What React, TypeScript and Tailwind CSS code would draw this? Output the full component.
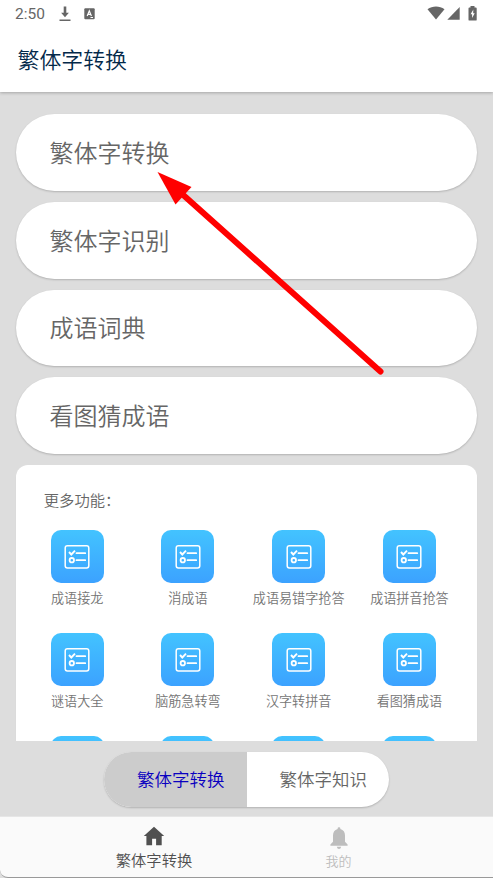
import React from 'react';

const menuItems = ['繁体字转换', '繁体字识别', '成语词典', '看图猜成语'];

const features = [
  '成语接龙',
  '消成语',
  '成语易错字抢答',
  '成语拼音抢答',
  '谜语大全',
  '脑筋急转弯',
  '汉字转拼音',
  '看图猜成语',
  '',
  '',
  '',
  '',
];

const StatusBar: React.FC = () => (
  <div className="flex h-7 items-center justify-between pl-[15px] pr-4 text-[#666666]">
    <div className="flex items-center">
      <span className="w-[44px] font-['Roboto',sans-serif] text-[15.5px] font-normal leading-7">2:50</span>
      <svg className="h-4 w-3" viewBox="0 0 12 16" fill="currentColor">
        <path d="M4.700 .5h2.600v6.300h2.600L6 11.300 2.100 6.800h2.600zM.5 13.500h11v1.500H.5z" />
      </svg>
      <svg className="ml-[13px] h-3 w-[11px]" viewBox="0 0 11 12">
        <rect x="0.300" y="0.200" width="10.400" height="11" rx="1" fill="currentColor" />
        <path d="M3.200 8 5.300 2.800 7.400 8M4 6.400h2.700M6.500 9.500h2.500" fill="none" stroke="white" strokeWidth="1.200" />
      </svg>
    </div>
    <div className="flex -translate-y-px items-center">
      <svg className="h-[14px] w-[18px]" viewBox="0 0 18 14" fill="currentColor">
        <path d="M.5 3.300C5.400-.3 12.600-.3 17.500 3.300L9 13.500z" />
      </svg>
      <svg className="ml-[2px] h-[14px] w-[13px]" viewBox="0 0 13 14" fill="currentColor">
        <path d="M12.700 1v12.700H.3z" />
      </svg>
      <svg className="ml-2 h-[15px] w-[9px]" viewBox="0 0 9 15">
        <path d="M2.500 0h4v1.500h1.300q.9 0 .9.900v11.300q0 .9-.9.900H1.400q-.9 0-.9-.9V2.400q0-.9.900-.9h1.100z" fill="currentColor" />
        <path d="M5.300 3.500 2.600 8.300h1.500v3.700l2.600-4.800H5.200z" fill="white" />
      </svg>
    </div>
  </div>
);

const FeatureIcon: React.FC = () => (
  <div className="flex h-[53px] w-[53px] items-center justify-center rounded-[10px] bg-gradient-to-b from-[#43c3ff] to-[#3ca2ff]">
    <svg className="h-[25px] w-[26px]" viewBox="0 0 26 25" fill="none" stroke="white" strokeWidth="1.500">
      <rect x="1.200" y="1.700" width="23.600" height="22.300" rx="2.200" />
      <path d="m5 8 2.300 2.500L11 6.600" strokeWidth="1.900" />
      <path d="M12.500 9.200h8.700M12.500 16.200h8.700" strokeWidth="1.800" strokeLinecap="round" />
      <circle cx="7.800" cy="16.200" r="2.200" strokeWidth="1.800" />
    </svg>
  </div>
);

const App: React.FC = () => {
  return (
    <div className="relative flex h-[878px] w-[493px] flex-col overflow-hidden bg-[#dddddd] font-['Noto_Sans_CJK_SC',sans-serif] font-[350] text-[#666666]">
      <header className="z-10 h-[92px] shrink-0 bg-white shadow-[0_1px_3px_rgba(0,0,0,0.25)]">
        <StatusBar />
        <h1 className="pl-[17.500px] pt-[15px] text-[21.900px] font-[350] leading-8 text-[#03294a]">繁体字转换</h1>
      </header>

      <main className="flex h-[649px] shrink-0 flex-col gap-[11px] overflow-hidden px-4 pt-[22px]">
        {menuItems.map((item) => (
          <button
            key={item}
            className="flex h-[76.800px] w-[461px] shrink-0 items-center rounded-full bg-white pb-px pl-[33.500px] text-left text-[24px] shadow-[0_1px_2px_rgba(0,0,0,0.2)]"
          >
            {item}
          </button>
        ))}

        {/* More features */}
        <section className="w-[461px] shrink-0 rounded-[12px] bg-white pl-[5.800px] pt-[22px] shadow-[0_1px_1px_rgba(0,0,0,0.08)]">
          <h2 className="mb-[19px] pl-[22px] text-[15.300px] font-[350] leading-6">更多功能：</h2>
          <div className="grid w-[443px] grid-cols-4">
            {features.map((name, index) => (
              <div key={index} className="flex h-[103px] flex-col items-center">
                <FeatureIcon />
                <span className="mt-[5px] whitespace-nowrap text-[13.100px] leading-5 text-[#757575]">{name}</span>
              </div>
            ))}
          </div>
        </section>
      </main>

      <div className="flex h-[75px] shrink-0 justify-center pt-[11px]">
        <div className="flex h-[55px] w-[285px] overflow-hidden rounded-full bg-white text-[17.500px] shadow-[0_1px_2px_rgba(0,0,0,0.2)]">
          <button className="w-[142.500px] bg-[#cccccc] pl-[33px] text-left text-[#0a00c0]">繁体字转换</button>
          <button className="flex-1 pl-[33px] text-left">繁体字知识</button>
        </div>
      </div>

      <nav className="flex h-[62px] shrink-0 justify-center rounded-bl-[8px] border-b border-t border-b-[#999999] border-t-[#e6e6e6] bg-[#fafafa]">
        <button className="flex w-[185px] flex-col items-center pt-[9px] text-[#505050]">
          <svg className="h-5 w-[22px]" viewBox="0 0 22 20" fill="currentColor">
            <path d="M11 .7.800 10.100h2.600v9.200h5.700v-6.600h4v6.600h5.600v-9.200h2.500z" />
          </svg>
          <span className="mt-px text-[15.300px] leading-6">繁体字转换</span>
        </button>
        <button className="flex w-[185px] flex-col items-center pr-px pt-[10px] text-[#bdbdbd]">
          <svg className="h-[23px] w-5" viewBox="0 0 20 23" fill="currentColor">
            <path d="M8.600 2.100v-.4q0-1.400 1.400-1.400t1.400 1.400v.4Q16 3.400 16 8.600v6.200l2.600 2.700v1.200H1.400v-1.200L4 14.800V8.600q0-5.200 4.600-6.500zM7.800 19.800h4.400q-.5 2.200-2.200 2.200t-2.200-2.200z" />
          </svg>
          <span className="mt-px text-[13px] leading-5">我的</span>
        </button>
      </nav>

      {/* Pointer over the first menu entry */}
      <svg className="pointer-events-none absolute left-0 top-0 z-20" width="493" height="878" viewBox="0 0 493 878">
        <path d="M181 193 380.500 371.500" stroke="#ff0000" strokeWidth="6" strokeLinecap="round" />
        <path d="M157.500 172 191.500 187 175.500 204.500z" fill="#ff0000" />
      </svg>
    </div>
  );
};

export default App;
